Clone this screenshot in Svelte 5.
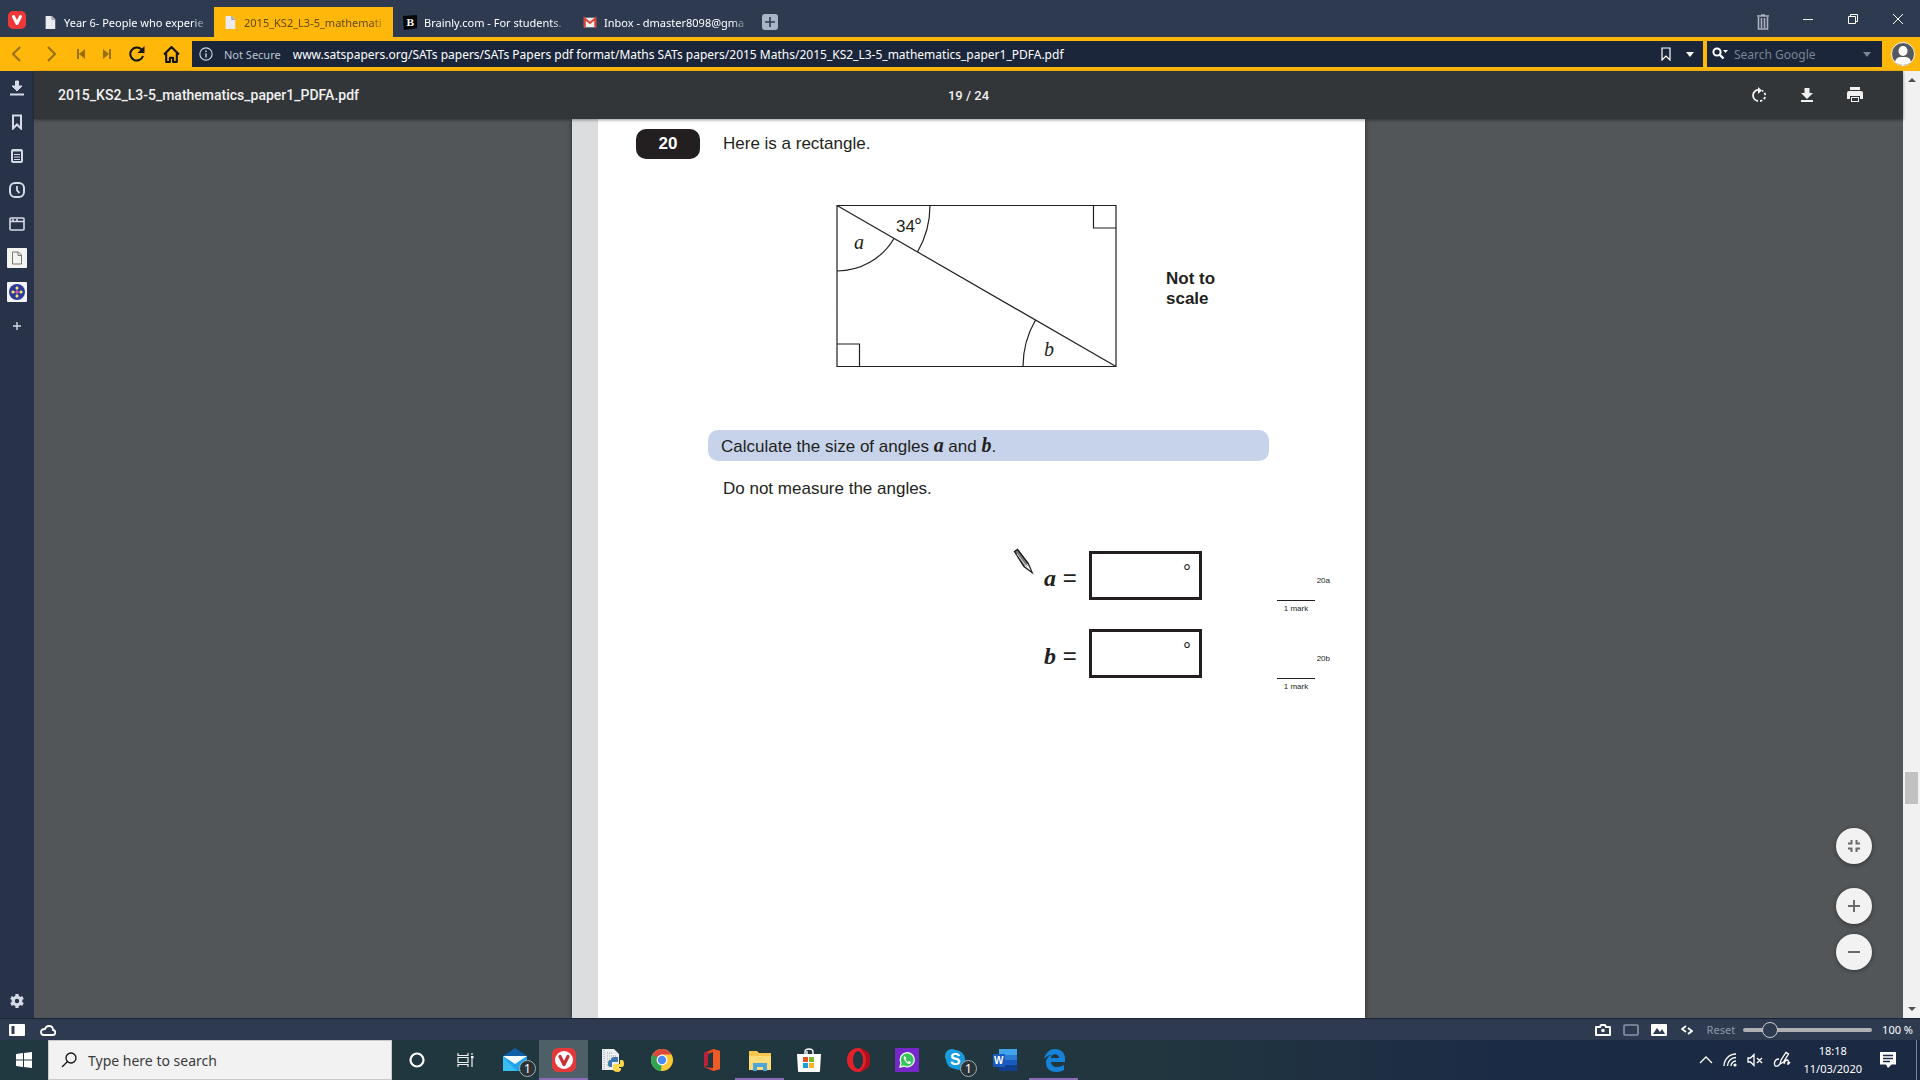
<script>
  const address =
    "www.satspapers.org/SATs papers/SATs Papers pdf format/Maths SATs papers/2015 Maths/2015_KS2_L3-5_mathematics_paper1_PDFA.pdf";

  const fileIcon =
    '<path d="M3 1h7l4 4v11H3z" fill="#e9ebee"/><path d="M10 1v4h4" fill="#b9bec6" stroke="#8a8f98" stroke-width=".8"/>';

  const tabs = [
    { title: "Year 6- People who experie", icon: fileIcon },
    { title: "2015_KS2_L3-5_mathemati", icon: fileIcon, active: true },
    {
      title: "Brainly.com - For students.",
      icon: '<path d="M0 1l16-1v15l-15 2z" fill="#050505"/><text x="4" y="13" font-family="Liberation Serif, serif" font-weight="700" font-size="13" fill="#fff">B</text>',
    },
    {
      title: "Inbox - dmaster8098@gma",
      icon: '<path d="M1 3h14v11H1z" fill="#f4f1f1"/><path d="M2 14V4l6 5 6-5v10" fill="none" stroke="#dc4437" stroke-width="2.4"/>',
    },
  ];

  const panels = [
    { name: "Downloads", icon: '<path d="M6.500 1h3v5h3.500L8 11 3 6h3.500z" fill="currentColor"/><path d="M1 14.500h14" stroke-width="2"/>' },
    { name: "Bookmarks", icon: '<path d="M4 1.500h8v13l-4-4-4 4z" stroke-width="2"/>' },
    { name: "Notes", icon: '<rect x="3" y="2" width="10" height="12" rx="1" stroke-width="2"/><path d="M3 3h10M5 6.500h6M5 9h6M5 11.500h6" stroke-width="1.100"/>' },
    { name: "History", icon: '<rect x="1" y="1" width="14" height="14" rx="5" stroke-width="2"/><path d="M8 4v4.500l2.500 2.500" stroke-width="1.800"/>' },
    { name: "Window", icon: '<rect x="1" y="2" width="14" height="12" rx="1" stroke-width="1.600"/><path d="M1 5.500h14M4 3v2M8 3v2" stroke-width="1.600"/>' },
  ];

  const apps = [
    { name: "Cortana", icon: '<circle cx="12" cy="12" r="6.500" fill="none" stroke="#fff" stroke-width="2.200"/>' },
    { name: "Task View", icon: '<path d="M4 5v2.500h10V5M4 19v-2.500h10V19M4 9.500h10v5H4zM18 5v2M18 11v8" fill="none" stroke="#f2f2f2" stroke-width="1.200"/><path d="M17 8h2.500v2.500H17z" fill="#fff"/>' },
    { name: "Mail", badge: 1, icon: '<path d="M0 8l12-8 12 8v4H0z" fill="#0f5ea8"/><path d="M0 8h24v15H0z" fill="#1fa3ea"/><path d="M0 8h24l-12 8z" fill="#f4fbff"/><path d="M0 23V9l14 14z" fill="#39bdf3"/>' },
    { name: "Vivaldi", active: true, open: true, icon: '<rect x="0" y="0" width="24" height="24" rx="6" fill="#e5383b"/><circle cx="12" cy="12" r="9" fill="#fff"/><path d="M8 8.500l4 8 4-8" fill="none" stroke="#c83035" stroke-width="3.200" stroke-linecap="round" stroke-linejoin="round"/>' },
    { name: "Python", icon: '<path d="M1 1h12l5 5v16H1z" fill="#eceff0"/><path d="M3 2v20M6 5h6M6 8h9M6 11h5M6 14h4M6 17h4" stroke="#9aa1a5" stroke-dasharray="1 1" fill="none"/><path d="M11 16v-2h6V9h-3q-4 0-4 2v1H9q-2 0-2 4 0 3 2 3h2z" fill="#3b77ad"/><path d="M19 12h2q2 0 2 4 0 3-2 3h-4v1h3q0 4-3 4-5 0-5-3v-3q0-2 2-2h5z" fill="#ffd748"/>' },
    { name: "Chrome", icon: '<circle cx="12" cy="12" r="11" fill="#fcc934"/><path d="M12 12L2.500 6.500A11 11 0 0 0 11 23z" fill="#30a553"/><path d="M2.500 6.500a11 11 0 0 1 19 0H12L7 15z" fill="#dc4a3e"/><path d="M2.500 6.500L7.500 15 12 12z" fill="#30a553"/><circle cx="12" cy="12" r="5.400" fill="#fff"/><circle cx="12" cy="12" r="4.200" fill="#4b8bf5"/>' },
    { name: "Office", icon: '<path d="M14 1l7 2v18l-7 2-9-4 9 1V4L9 6v11l-4 2V5z" fill="#e8451f"/><path d="M14 1l7 2v18l-7 2z" fill="#f05a24"/><path d="M5 5l4-2v14l-4 2z" fill="#b9203a"/>' },
    { name: "File Explorer", open: true, icon: '<path d="M1 3h8l2 2h12v17H1z" fill="#f4c64e"/><path d="M1 8h22v14H1z" fill="#fbdc76"/><path d="M5 23v-8h14v8h-4v-4H9v4z" fill="#4da3dc"/>' },
    { name: "Store", icon: '<path d="M8 7V4q0-3 4-3t4 3v3M10 6V3" fill="none" stroke="#fff" stroke-width="1.400"/><path d="M0 6h24l-1 17q0 1-1 1H2q-1 0-1-1z" fill="#fff"/><path d="M6 9h5v5H6z" fill="#e34f26"/><path d="M12 9h5v5h-5z" fill="#7cb928"/><path d="M6 15h5v5H6z" fill="#1b9de2"/><path d="M12 15h5v5h-5z" fill="#f6b51e"/>' },
    { name: "Opera", icon: '<ellipse cx="12" cy="12" rx="11" ry="12" fill="#e3202c"/><path d="M14 1a11 11 0 0 1 0 22q6-4 6-11t-6-11z" fill="#b00f1c"/><ellipse cx="12" cy="12" rx="5" ry="9" fill="#203840"/>' },
    { name: "WhatsApp", icon: '<path d="M0 0h24v24H0z" fill="#7527c9"/><path d="M5 19l1-4a7 7 0 1 1 3 3z" fill="#36c45b" stroke="#e8f5ea" stroke-width="1.300"/><path d="M9.500 8q-1.500 1 0 4t4.500 4q2 0 2-2l-2-1-1 1q-2-1-2.500-3l1-1z" fill="#fff"/>' },
    { name: "Skype", badge: 1, icon: '<circle cx="8" cy="8" r="7" fill="#1da3e2"/><circle cx="15" cy="15" r="7" fill="#1590d5"/><circle cx="11.500" cy="11.500" r="9.500" fill="#169bde"/><text x="6" y="17" font-family="Liberation Sans, sans-serif" font-weight="700" font-size="16" fill="#fff">S</text>' },
    { name: "Word", icon: '<path d="M6 1h18v22H6z" fill="#2b7cd3"/><path d="M6 1h18v6H6z" fill="#41a5ee"/><path d="M6 17h18v6H6z" fill="#103f91"/><path d="M6 12h18v5H6z" fill="#185abd"/><path d="M0 6h12v13H0z" fill="#1b5abe"/><text x="1" y="16" font-family="Liberation Sans, sans-serif" font-weight="700" font-size="10" fill="#fff">W</text>' },
    { name: "Edge", open: true, icon: '<path d="M2 11C4 4 8 1 13 1c6 0 10 4 10 9v4H9c0 6 8 6 13 3v5c-7 4-18 2-18-7 0-4 2-7 6-8-4 0-6 2-8 4zm7-1h8c0-5-8-5-8 0z" fill="#1683d8"/>' },
  ];

  const answers = ["a", "b"];
  let zoom = 17;
</script>

<div class="browser">
  <header class="tabbar">
    <button class="menu" aria-label="Vivaldi menu">
      <svg viewBox="0 0 18 18" width="18" height="18">
        <rect width="18" height="18" rx="5" fill="#ef3939" />
        <path d="M5.500 5.500l3.500 7 3.500-7" fill="none" stroke="#fff" stroke-width="3" stroke-linecap="round" stroke-linejoin="round" />
      </svg>
    </button>
    <div class="tabs">
      {#each tabs as tab}
        <button class="tab" class:active={tab.active}>
          <svg viewBox="0 0 16 17" width="14" height="15">{@html tab.icon}</svg>
          <span class="tab-title">{tab.title}</span>
        </button>
      {/each}
    </div>
    <button class="new-tab" aria-label="New tab">
      <svg viewBox="0 0 16 16" width="16" height="16">
        <rect width="16" height="16" rx="3" fill="#a9b4c6" />
        <path d="M8 3v10M3 8h10" stroke="#2e3a50" stroke-width="1.600" />
      </svg>
    </button>
    <div class="window-controls">
      <button aria-label="Closed tabs">
        <svg viewBox="0 0 16 18" width="16" height="18" class="trash">
          <path d="M2 3h12M6 2h4M3.500 4v12h9V4M6.500 5v10M9.500 5v10" fill="none" stroke="#aab0bd" stroke-width="1.600" />
        </svg>
      </button>
      <button aria-label="Minimise">
        <svg viewBox="0 0 12 12" width="12" height="12"><path d="M1 6.500h10" stroke="#fff" /></svg>
      </button>
      <button aria-label="Restore">
        <svg viewBox="0 0 12 12" width="12" height="12">
          <path d="M1.500 3.500h7v7h-7zM3.500 3V1.500h7v7H9" fill="none" stroke="#fff" />
        </svg>
      </button>
      <button aria-label="Close">
        <svg viewBox="0 0 12 12" width="12" height="12"><path d="M1 1l10 10M11 1L1 11" stroke="#fff" /></svg>
      </button>
    </div>
  </header>

  <nav class="address-bar">
    <div class="nav-buttons">
      <button aria-label="Back" class="dim">
        <svg viewBox="0 0 16 16" width="16" height="16"><path d="M11 1L4 8l7 7" /></svg>
      </button>
      <button aria-label="Forward" class="dim">
        <svg viewBox="0 0 16 16" width="16" height="16"><path d="M5 1l7 7-7 7" /></svg>
      </button>
      <button aria-label="Rewind" class="dim small">
        <svg viewBox="0 0 10 12" width="10" height="12"><path d="M2 1v10" /><path d="M9 1v10L3 6z" fill="currentColor" stroke="none" /></svg>
      </button>
      <button aria-label="Fast forward" class="dim small">
        <svg viewBox="0 0 10 12" width="10" height="12"><path d="M8 1v10" /><path d="M1 1v10l6-5z" fill="currentColor" stroke="none" /></svg>
      </button>
      <button aria-label="Reload">
        <svg viewBox="0 0 16 16" width="16" height="16"><path d="M14 10a6.500 6.500 0 1 1-1.500-6.500" stroke-width="2.200" /><path d="M15.500 0v7h-7z" fill="currentColor" stroke="none" /></svg>
      </button>
      <button aria-label="Home">
        <svg viewBox="0 0 16 16" width="17" height="17"><path d="M1 8l7-7 7 7M3 7v8h3.500v-4h3v4H13V7" stroke-width="1.800" stroke-linejoin="round" /></svg>
      </button>
    </div>
    <div class="field url">
      <svg viewBox="0 0 16 16" width="14" height="14">
        <circle cx="8" cy="8" r="7" fill="none" stroke="#cfd5df" stroke-width="1.300" />
        <path d="M8 7v5M8 4v1.600" stroke="#cfd5df" stroke-width="1.600" />
      </svg>
      <span class="secure">Not Secure</span>
      <input type="text" aria-label="Address" value={address} />
      <button aria-label="Bookmark page">
        <svg viewBox="0 0 10 14" width="10" height="14"><path d="M1 1h8v12L5 9l-4 4z" fill="none" stroke="#fff" stroke-width="1.200" /></svg>
      </button>
      <button aria-label="Show typed history"><span class="caret"></span></button>
    </div>
    <div class="field search">
      <svg viewBox="0 0 16 14" width="16" height="14">
        <circle cx="5" cy="5" r="3.600" fill="none" stroke="#fff" stroke-width="2" />
        <path d="M7.500 7.500l4 4" stroke="#fff" stroke-width="2.400" />
        <path d="M11 3h5l-2.500 3z" fill="#fff" />
      </svg>
      <input type="text" aria-label="Search" placeholder="Search Google" />
      <button aria-label="Search history"><span class="caret dull"></span></button>
    </div>
    <button class="avatar" aria-label="Profile">
      <svg viewBox="0 0 24 24" width="24" height="24">
        <circle cx="12" cy="12" r="11.500" fill="#54595f" stroke="#f3f3f3" />
        <ellipse cx="12" cy="9" rx="4.500" ry="5" fill="#fff" />
        <path d="M4 20q1-5 6-5h4q5 0 6 5-8 6-16 0z" fill="#fff" />
      </svg>
    </button>
  </nav>

  <div class="middle">
    <aside class="panel">
      {#each panels as p}
        <button aria-label={p.name}>
          <svg viewBox="0 0 16 16" width="16" height="16">{@html p.icon}</svg>
        </button>
      {/each}
      <button aria-label="Document web panel">
        <svg viewBox="0 0 20 20" width="20" height="20" class="plain">
          <rect width="20" height="20" rx="1" fill="#f4f4f2" />
          <path d="M5.500 4h6l3 3v9h-9zM11 4v3.500h3.500" fill="none" stroke="#7b766c" />
        </svg>
      </button>
      <button aria-label="Network web panel">
        <svg viewBox="0 0 20 20" width="20" height="20" class="plain">
          <rect width="20" height="20" rx="1" fill="#f4f4f8" />
          <circle cx="10" cy="10" r="8" fill="#2b3a9b" />
          <path d="M10 4v12M4 10h12" stroke="#6b7fd0" />
          <circle cx="10" cy="6" r="1.500" fill="#ffe14d" /><circle cx="10" cy="14" r="1.500" fill="#ffe14d" />
          <circle cx="6" cy="10" r="1.500" fill="#ffe14d" /><circle cx="14" cy="10" r="1.500" fill="#ffe14d" />
          <circle cx="10" cy="10" r="1.500" fill="#e64a9a" />
        </svg>
      </button>
      <button aria-label="Add web panel">
        <svg viewBox="0 0 16 16" width="16" height="16"><path d="M8 4v8M4 8h8" stroke-width="1.400" /></svg>
      </button>
      <button aria-label="Settings" class="settings">
        <svg viewBox="0 0 16 16" width="16" height="16">
          <circle cx="8" cy="8" r="3.800" stroke-width="3.200" />
          <path d="M8 1v3M8 12v3M2 4.500l2.600 1.500M11.400 10l2.600 1.500M2 11.500L4.600 10M11.400 6L14 4.500" stroke-width="3.200" />
        </svg>
      </button>
    </aside>

    <main class="viewer">
      <div class="toolbar">
        <span class="doc-title">2015_KS2_L3-5_mathematics_paper1_PDFA.pdf</span>
        <span class="doc-page">19 / 24</span>
        <div class="doc-tools">
          <button aria-label="Rotate">
            <svg viewBox="0 0 16 16" width="16" height="16">
              <path d="M8 3a5.500 5.500 0 0 0-1 11" fill="none" stroke="#f1f1f1" stroke-width="1.800" />
              <path d="M9 14a5.500 5.500 0 0 0 2-10.500" fill="none" stroke="#f1f1f1" stroke-width="1.800" stroke-dasharray="2.500 1.800" />
              <path d="M7 0l4 3.500L7 7z" fill="#f1f1f1" />
            </svg>
          </button>
          <button aria-label="Download">
            <svg viewBox="0 0 16 16" width="16" height="16"><path d="M5.500 1h5v5H14l-6 6-6-6h3.500zM2 13h12v2H2z" fill="#f1f1f1" /></svg>
          </button>
          <button aria-label="Print">
            <svg viewBox="0 0 18 16" width="18" height="16">
              <path d="M4 0h10v3H4zM3 4h12q2 0 2 2v6h-3V9H4v3H1V6q0-2 2-2zM5 10h8v5H5z" fill="#f1f1f1" />
              <path d="M6 11h6v3H6z" fill="#323639" />
            </svg>
          </button>
        </div>
      </div>

      <div class="canvas">
        <article class="sheet">
          <div class="question">
            <span class="number">20</span>
            <p>Here is a rectangle.</p>
          </div>

          <div class="figure">
            <svg viewBox="0 0 290 174" width="290" height="174" role="img" aria-label="Rectangle with a diagonal">
              <g fill="none" stroke="#231f20" stroke-width="1.200">
                <path d="M5 5.500h279v161H5zM5 5.500l279 161" />
                <path d="M261.500 5.500v22.500H284M5 144h22.500v22.500" />
                <path d="M98 5.500a93 93 0 0 1-12.500 46.500M5 71a66 66 0 0 0 57-32.500M191 166.500a93 93 0 0 1 12.500-46.500" />
              </g>
              <text x="64" y="32">34</text>
              <text x="82" y="33" class="ring">°</text>
              <text x="22" y="49" class="var">a</text>
              <text x="212" y="156" class="var">b</text>
            </svg>
            <p class="scale">Not to<br />scale</p>
          </div>

          <p class="task">Calculate the size of angles <b>a</b> and <b>b</b>.</p>
          <p class="hint">Do not measure the angles.</p>

          <div class="answers">
            {#each answers as letter}
              <div class="answer">
                <span class="letter"><b>{letter}</b> =</span>
                <span class="box">°</span>
                <span class="mark">
                  <span class="ref">20{letter}</span>
                  <span class="score">1 mark</span>
                </span>
              </div>
            {/each}
            <svg class="pencil" viewBox="0 0 22 27" width="22" height="27">
              <path d="M1.500 3.500L4.500 1.500 15 15l4 9.500-8-6z" fill="#777" stroke="#1c1a1b" stroke-width="1.400" />
              <path d="M4 6l9 12M12 19l3-3" stroke="#e4e4e4" />
              <path d="M13 19l2-2 3 6z" fill="#fff" />
            </svg>
          </div>
        </article>

        <div class="zoom-buttons">
          <button aria-label="Fit to page" class="fit">
            <svg viewBox="0 0 14 14" width="14" height="14"><path d="M1 4.500h3.500V1M9.500 1v3.500H13M1 9.500h3.500V13M9.500 13V9.500H13" /></svg>
          </button>
          <button aria-label="Zoom in">
            <svg viewBox="0 0 14 14" width="14" height="14"><path d="M7 1v12M1 7h12" /></svg>
          </button>
          <button aria-label="Zoom out">
            <svg viewBox="0 0 14 14" width="14" height="14"><path d="M1 7h12" /></svg>
          </button>
        </div>
      </div>
    </main>

    <div class="scrollbar">
      <span class="arrow up"></span>
      <span class="track"><span class="thumb"></span></span>
      <span class="arrow down"></span>
    </div>
  </div>

  <footer class="status">
    <button aria-label="Toggle panel">
      <svg viewBox="0 0 16 12" width="16" height="12"><rect width="16" height="12" rx="1" fill="#fff" /><path d="M2.500 2h3v8h-3z" fill="#2e3a50" /></svg>
    </button>
    <button aria-label="Sync">
      <svg viewBox="0 0 16 12" width="16" height="12"><path d="M4 11h8.500a2.500 2.500 0 0 0 .5-5q0-4-4-4-3 0-4 3-4 0-4 3 0 3 3 3z" fill="none" stroke="#fff" stroke-width="1.800" /></svg>
    </button>
    <div class="status-right">
      <button aria-label="Capture page">
        <svg viewBox="0 0 16 12" width="16" height="12"><path d="M1 3h4l1-2h4l1 2h4v8H1z" fill="none" stroke="#fff" stroke-width="2" stroke-linejoin="round" /><circle cx="8" cy="6.500" r="1.800" fill="#fff" /></svg>
      </button>
      <button aria-label="Tile tabs">
        <svg viewBox="0 0 16 12" width="16" height="12"><rect x="1" y="1" width="14" height="10" rx="1" fill="none" stroke="#8995aa" stroke-width="1.600" /></svg>
      </button>
      <button aria-label="Toggle images">
        <svg viewBox="0 0 16 12" width="16" height="12"><rect width="16" height="12" rx="1" fill="#fff" /><path d="M2 10l4-6 3 4 2-3 3 5z" fill="#2e3a50" /></svg>
      </button>
      <button aria-label="Page actions" class="code">
        <svg viewBox="0 0 12 10" width="12" height="10"><path d="M5 1L1 4l4 3M7 3l4 3-4 3" fill="none" stroke="#fff" stroke-width="1.800" /></svg>
      </button>
      <button class="reset">Reset</button>
      <input type="range" min="0" max="100" bind:value={zoom} aria-label="Page zoom" />
      <span class="percent">100 %</span>
    </div>
  </footer>

  <footer class="taskbar">
    <button class="start" aria-label="Start">
      <svg viewBox="0 0 16 16" width="16" height="16"><path d="M0 2l7-1v6.500H0zM8 1l8-1v7.500H8zM0 8.500h7V15l-7-1zM8 8.500h8V16l-8-1z" fill="#fff" /></svg>
    </button>
    <label class="task-search">
      <svg viewBox="0 0 16 16" width="16" height="16"><circle cx="10" cy="6" r="5" fill="none" stroke="#111" stroke-width="1.300" /><path d="M6.500 9.500L1 15" stroke="#111" stroke-width="1.300" /></svg>
      <input type="text" placeholder="Type here to search" aria-label="Type here to search" />
    </label>
    <div class="apps">
      {#each apps as app}
        <button class="app" class:active={app.active} class:open={app.open} aria-label={app.name}>
          <svg viewBox="0 0 24 24" width="24" height="24">{@html app.icon}</svg>
          {#if app.badge}<span class="count">{app.badge}</span>{/if}
        </button>
      {/each}
    </div>
    <div class="tray">
      <button aria-label="Hidden icons">
        <svg viewBox="0 0 14 14" width="14" height="14"><path d="M1 10l6-6 6 6" /></svg>
      </button>
      <button aria-label="Network">
        <svg viewBox="0 0 14 14" width="14" height="14"><path d="M1 13A12 12 0 0 1 13 1M4.500 13A8.500 8.500 0 0 1 13 4.500M8 13a5 5 0 0 1 5-5" /><circle cx="12" cy="12" r="1.600" fill="#fff" stroke="none" /></svg>
      </button>
      <button aria-label="Volume muted">
        <svg viewBox="0 0 16 14" width="16" height="14"><path d="M1 5h2.500L7 1.500v11L3.500 9H1zM10 5l5 5M15 5l-5 5" /></svg>
      </button>
      <button aria-label="Windows Ink">
        <svg viewBox="0 0 18 18" width="18" height="18"><path d="M7 13l1-4 5-7.500 2.500 1.500-5 8zM6 8q-4 0-4.500 4T5 15l2-2M11 13q1-4 3-4t1 3 2-1" /></svg>
      </button>
      <div class="clock"><span>18:18</span><span>11/03/2020</span></div>
      <button aria-label="Notifications">
        <svg viewBox="0 0 16 16" width="16" height="16"><path d="M0 0h16v12.500h-4.500L8 16l-2-3.500H0z" fill="#fff" stroke="none" /><path d="M3 3.500h10M3 6.500h10M3 9.500h7" class="lines" /></svg>
      </button>
      <span class="desktop"></span>
    </div>
  </footer>
</div>

<style>
  :global(body) {
    margin: 0;
    overflow: hidden;
  }

  .browser {
    display: flex;
    flex-direction: column;
    height: 100vh;
    font-family: "Noto Sans", "Open Sans", sans-serif;
    font-size: 12px;
    color: #fff;
    background: #2e3a50;
  }

  button {
    display: flex;
    align-items: center;
    justify-content: center;
    padding: 0;
    border: none;
    background: none;
    color: inherit;
    font: inherit;
  }

  input {
    min-width: 0;
    padding: 0;
    border: none;
    outline: none;
    background: none;
    font: inherit;
    color: inherit;
  }

  p {
    margin: 0;
  }

  svg {
    flex: none;
  }

  /* Tab bar */
  .tabbar {
    display: flex;
    height: 37px;
    background: #2e3a50;
  }

  .menu {
    width: 34px;
    padding-top: 3px;
  }

  .tabs {
    display: flex;
    padding-top: 7px;
  }

  .tab {
    justify-content: flex-start;
    gap: 7px;
    width: 179px;
    padding: 0 4px 0 9px;
    margin-right: 1px;
    font-size: 11px;
  }

  .tab.active {
    background: #ffb70a;
    color: #5f4a10;
  }

  .tab-title {
    flex: 1;
    overflow: hidden;
    white-space: nowrap;
    text-align: left;
    mask-image: linear-gradient(to right, #000 88%, transparent);
  }

  .new-tab {
    width: 32px;
    padding-top: 7px;
  }

  .window-controls {
    display: flex;
    margin-left: auto;
  }

  .window-controls button {
    width: 45px;
  }

  .trash {
    margin-top: 6px;
  }

  /* Address bar */
  .address-bar {
    display: flex;
    gap: 4px;
    height: 26px;
    padding: 4px 0;
    background: #ffb70a;
  }

  .nav-buttons {
    display: flex;
    width: 188px;
    color: #10141c;
  }

  .nav-buttons button {
    width: 34px;
  }

  .nav-buttons .small {
    width: 26px;
  }

  .nav-buttons .dim {
    color: #96710f;
  }

  .nav-buttons path {
    fill: none;
    stroke: currentColor;
    stroke-width: 2;
  }

  .nav-buttons path[fill] {
    fill: currentColor;
    stroke: none;
  }

  .field {
    display: flex;
    align-items: center;
    background: #1b263a;
  }

  .field input {
    flex: 1;
    padding-top: 1px;
  }

  .field button {
    width: 24px;
    height: 26px;
  }

  .url {
    flex: 1;
    padding-left: 7px;
    padding-right: 1px;
  }

  .secure {
    margin: 0 12px 0 11px;
    font-size: 11px;
    color: #bcc4d1;
  }

  .search {
    width: 167px;
    padding-left: 5px;
    padding-right: 3px;
    gap: 6px;
  }

  .search input::placeholder {
    color: #7a8495;
  }

  .caret {
    border: 4px solid transparent;
    border-top: 5px solid #fff;
    border-bottom: none;
  }

  .caret.dull {
    border-top-color: #7a8495;
  }

  .avatar {
    width: 34px;
  }

  /* Side panel */
  .middle {
    display: flex;
    flex: 1;
    min-height: 0;
  }

  .panel {
    display: flex;
    flex-direction: column;
    width: 34px;
    background: #283349;
    color: #d5dbe6;
  }

  .panel button {
    height: 34px;
  }

  .panel svg {
    fill: none;
    stroke: currentColor;
  }

  .panel .plain {
    stroke: none;
  }

  .panel .settings {
    margin-top: auto;
  }

  /* Document viewer */
  .viewer {
    display: flex;
    flex-direction: column;
    flex: 1;
    min-width: 0;
    background: #525659;
  }

  .toolbar {
    display: grid;
    grid-template-columns: 1fr auto 1fr;
    align-items: center;
    height: 48px;
    padding: 0 24px;
    background: #323639;
    color: #f1f1f1;
    font-family: Roboto, sans-serif;
    font-size: 14px;
    font-weight: 500;
    box-shadow: 0 1px 3px rgba(0, 0, 0, 0.4);
    z-index: 1;
  }

  .doc-page {
    font-size: 13px;
  }

  .doc-tools {
    display: flex;
    justify-content: flex-end;
  }

  .doc-tools button {
    width: 48px;
  }

  .canvas {
    display: flex;
    justify-content: center;
    flex: 1;
    position: relative;
    min-height: 0;
    overflow: hidden;
  }

  .sheet {
    box-sizing: border-box;
    width: 100%;
    max-width: 793px;
    padding-top: 10px;
    border-left: 26px solid #dcddde;
    background: #fff;
    box-shadow: 0 0 5px rgba(0, 0, 0, 0.5);
    color: #231f20;
    font-family: "Liberation Sans", Arial, sans-serif;
    font-size: 17px;
    line-height: 20px;
  }

  .sheet b {
    font-family: "Liberation Serif", "Times New Roman", serif;
    font-style: italic;
    font-size: 20px;
  }

  .question {
    display: flex;
    align-items: center;
    gap: 23px;
    padding-left: 38px;
  }

  .number {
    width: 64px;
    border-radius: 10px;
    background: #231f20;
    color: #fff;
    font-weight: 700;
    line-height: 30px;
    text-align: center;
  }

  .figure {
    display: flex;
    align-items: center;
    gap: 44px;
    margin-top: 41px;
    padding-left: 234px;
  }

  .figure text {
    fill: #231f20;
  }

  .figure .ring {
    font-size: 20px;
  }

  .figure .var {
    font-family: "Liberation Serif", "Times New Roman", serif;
    font-style: italic;
    font-size: 20px;
  }

  .scale {
    padding-top: 3px;
    font-weight: 700;
  }

  .task {
    height: 31px;
    margin: 56px 96px 0 110px;
    padding-left: 13px;
    border-radius: 10px;
    background: #c7d3ea;
    line-height: 30px;
  }

  .hint {
    margin: 18px 0 0 125px;
  }

  .answers {
    position: relative;
    margin: 52px 34px 0 446px;
  }

  .answer {
    display: flex;
    height: 78px;
  }

  .letter {
    width: 45px;
    padding-top: 17px;
    font-size: 24px;
    white-space: nowrap;
  }

  .sheet .letter b {
    font-size: 24px;
  }

  .box {
    box-sizing: border-box;
    width: 113px;
    height: 49px;
    padding: 8px;
    border: 3px solid #231f20;
    font-size: 20px;
    text-align: right;
  }

  .mark {
    display: flex;
    flex-direction: column;
    width: 53px;
    margin-left: 75px;
    padding-top: 24px;
    font-size: 8px;
    line-height: 12px;
  }

  .ref {
    text-align: right;
  }

  .score {
    width: 38px;
    margin-top: 13px;
    padding-top: 2px;
    border-top: 1px solid #231f20;
    text-align: center;
  }

  .pencil {
    position: absolute;
    left: -31px;
    top: -3px;
  }

  .zoom-buttons {
    position: absolute;
    right: 31px;
    bottom: 48px;
    display: flex;
    flex-direction: column;
    gap: 10px;
  }

  .zoom-buttons button {
    width: 36px;
    height: 36px;
    border-radius: 50%;
    background: #f2f2f2;
    box-shadow: 0 1px 4px rgba(0, 0, 0, 0.4);
  }

  .zoom-buttons .fit {
    margin-bottom: 14px;
  }

  .zoom-buttons path {
    fill: none;
    stroke: #6a6a6a;
    stroke-width: 2;
  }

  .scrollbar {
    display: flex;
    flex-direction: column;
    align-items: center;
    width: 17px;
    background: #f1f1f1;
  }

  .arrow {
    margin: 7px 0;
    border: 4px solid transparent;
  }

  .arrow.up {
    border-top: none;
    border-bottom-color: #505050;
  }

  .arrow.down {
    border-bottom: none;
    border-top-color: #505050;
  }

  .track {
    flex: 1;
    width: 13px;
  }

  .track::before {
    content: "";
    display: block;
    height: 75%;
  }

  .thumb {
    display: block;
    height: 32px;
    background: #c1c1c1;
  }

  /* Status bar */
  .status {
    display: flex;
    align-items: center;
    gap: 15px;
    height: 22px;
    padding: 0 7px 0 9px;
    border-top: 1px solid #1c2536;
    box-sizing: border-box;
    background: #2e3a50;
  }

  .status-right {
    display: flex;
    align-items: center;
    gap: 12px;
    margin-left: auto;
  }

  .code {
    margin: 0 2px;
  }

  .reset {
    font-size: 11px;
    color: #8d97a8;
  }

  .status input {
    appearance: none;
    width: 129px;
    height: 16px;
    margin: 0 -2px 0 -4px;
  }

  .status input::-webkit-slider-runnable-track {
    height: 4px;
    border-radius: 2px;
    background: #aeb0b4;
  }

  .status input::-webkit-slider-thumb {
    appearance: none;
    width: 16px;
    height: 16px;
    margin-top: -6px;
    border: 1px solid #c8ccd4;
    border-radius: 50%;
    background: #2e3a50;
  }

  .percent {
    font-size: 11px;
  }

  /* Windows taskbar */
  .taskbar {
    display: flex;
    height: 40px;
    background: linear-gradient(to right, #20383f, #21363f 60%, #1b2a45 80%, #1b2942);
  }

  .start {
    width: 48px;
  }

  .task-search {
    box-sizing: border-box;
    display: flex;
    align-items: center;
    gap: 11px;
    width: 344px;
    padding-left: 12px;
    border: 1px solid #c9c9c9;
    background: #f2f2f2;
  }

  .task-search input {
    flex: 1;
    font-size: 14px;
  }

  .task-search input::placeholder {
    color: #3a3a3a;
  }

  .apps {
    display: flex;
  }

  .app {
    position: relative;
    box-sizing: border-box;
    width: 49px;
    padding-top: 2px;
    border-bottom: 2px solid transparent;
  }

  .app.open {
    border-bottom-color: #8a6db8;
  }

  .app.active {
    background-color: #4e6067;
  }

  .count {
    position: absolute;
    right: 3px;
    bottom: 1px;
    width: 15px;
    border: 1px solid #a5adb0;
    border-radius: 50%;
    background: #2a3338;
    line-height: 15px;
    text-align: center;
  }

  .tray {
    display: flex;
    align-items: center;
    gap: 10px;
    margin-left: auto;
  }

  .tray path {
    fill: none;
    stroke: #fff;
    stroke-width: 1.3;
  }

  .tray path[fill="#fff"] {
    fill: #fff;
    stroke: none;
  }

  .tray .lines {
    stroke: #1b2a45;
  }

  .clock {
    display: flex;
    flex-direction: column;
    align-items: center;
    margin: 0 8px 0 2px;
    font-size: 11px;
    line-height: 18px;
  }

  .desktop {
    align-self: stretch;
    width: 3px;
    margin-left: 10px;
    border-left: 1px solid #7a8495;
  }
</style>
